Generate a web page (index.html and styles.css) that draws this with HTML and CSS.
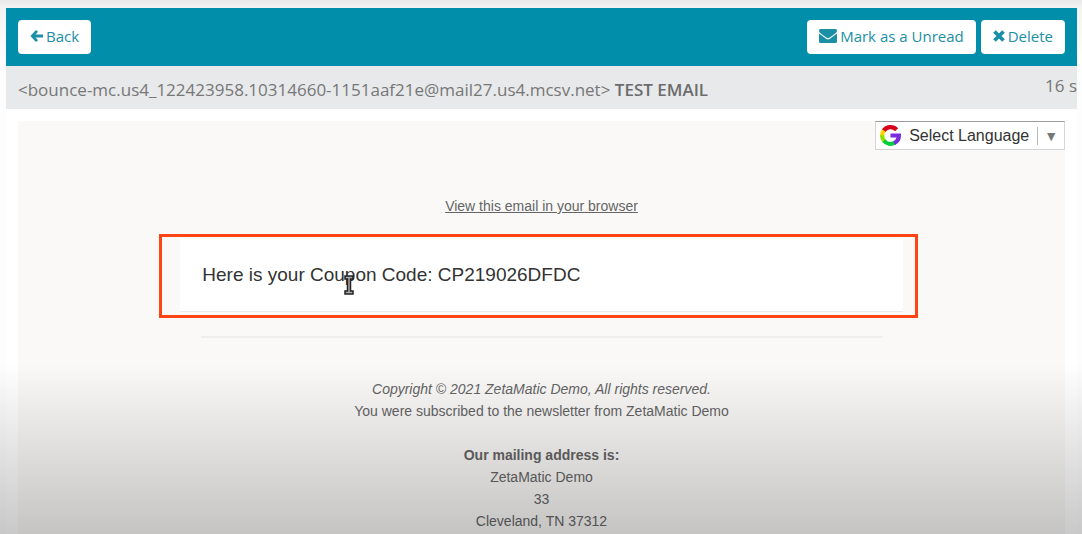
FILE: index.html
```html
<!DOCTYPE html>
<html lang="en">
<head>
  <meta charset="UTF-8">
  <meta name="viewport" content="width=device-width, initial-scale=1.0">
  <title>TEST EMAIL</title>
  <link rel="stylesheet" href="styles.css">
</head>
<body>
  <div class="mail">
    <div class="toolbar">
      <button type="button" class="btn">
        <svg class="icon-back" viewBox="0 0 14 14"><path d="M7.5 1.5 2.5 7l5 5.5M3 7h11" fill="none" stroke="currentColor" stroke-width="3"/></svg>
        Back
      </button>
      <div class="actions">
        <button type="button" class="btn">
          <svg class="icon-mail" viewBox="0 0 18 14"><path fill="currentColor" d="M1.5 0h15A1.5 1.5 0 0 1 18 1.5C18 3 17 4 16 4.700L11.500 8C10.500 8.700 9.800 9.200 9 9.200S7.500 8.700 6.500 8L2 4.700C1 4 0 3 0 1.500A1.500 1.500 0 0 1 1.500 0zM0 4.500 5.800 8.800C7 9.700 8 10.400 9 10.400s2-.7 3.200-1.600L18 4.500v8a1.500 1.500 0 0 1-1.500 1.500h-15A1.500 1.500 0 0 1 0 12.500z"/></svg>
          Mark as a Unread
        </button>
        <button type="button" class="btn">
          <svg class="icon-delete" viewBox="0 0 12 12"><path d="m1.5 1.5 9 9m0-9-9 9" stroke="currentColor" stroke-width="3.8"/></svg>
          Delete
        </button>
      </div>
    </div>

    <div class="subject">
      <div class="sender">&lt;bounce-mc.us4_122423958.10314660-1151aaf21e@mail27.us4.mcsv.net&gt; <b>TEST EMAIL</b></div>
      <div class="age">16 s</div>
    </div>

    <div class="body">
      <div class="message">
        <label class="language">
          <svg class="icon-g" viewBox="0 0 20 20" fill="none" stroke-width="4">
            <path stroke="#d9001b" d="M3.2 5.8A8 8 0 0 1 15.8 4.5"/>
            <path stroke="#ffd500" d="M3.6 5.2A8 8 0 0 0 2.1 11"/>
            <path stroke="#8fe000" d="M2 9.8A8 8 0 0 0 4.2 15.5"/>
            <path stroke="#00cf3a" d="M3.8 15A8 8 0 0 0 14 16.9"/>
            <path stroke="#7a2be0" d="M10 10h8A8 8 0 0 1 13.5 17.2"/>
          </svg>
          <select aria-label="Select Language">
            <option>Select Language</option>
          </select>
          <span class="arrow">▼</span>
        </label>

        <p class="view"><a href="#">View this email in your browser</a></p>

        <div class="card">
          Here is your Coupon Code: CP219026DFDC
          <div class="highlight"></div>
          <svg class="cursor" viewBox="0 0 10 20"><path d="M1 1h8v3H6.5v12H9v3H1v-3h2.5V4H1z" fill="#aaa" stroke="#222" stroke-width="1.5"/></svg>
        </div>

        <div class="footer">
          <em>Copyright © 2021 ZetaMatic Demo, All rights reserved.</em><br>
          You were subscribed to the newsletter from ZetaMatic Demo<br>
          <br>
          <strong>Our mailing address is:</strong><br>
          ZetaMatic Demo<br>
          33<br>
          Cleveland, TN 37312
        </div>
      </div>
    </div>
  </div>
  <div class="shade"></div>
</body>
</html>
```

FILE: styles.css
```css
* { box-sizing:border-box; }
html, body { margin:0; height:100%; overflow:hidden; }
body { position:relative; display:flex; flex-direction:column; padding:8px 5px 0 6px; background:linear-gradient(#e9e9e9, #f3f3f3 8px, #fdfdfd 60px); font-family:"Open Sans",sans-serif; color:#777; }

.mail { flex:1; display:flex; flex-direction:column; min-height:0; background:#fff; }

.toolbar { display:flex; justify-content:space-between; padding:12px; background:#008eaa; }
.actions { display:flex; gap:5px; }
.btn { display:flex; align-items:center; gap:3px; height:34px; padding:0 12px 2px; border:0; border-radius:4px; background:#fff; color:#1b8fa6; font-family:"Open Sans",sans-serif; font-size:15px; }
.icon-back { width:13px; height:14px; }
.icon-mail { width:18px; height:14px; }
.icon-delete { width:12px; height:12px; }

.subject { display:flex; justify-content:space-between; height:43px; padding-left:12px; background:#e7e9eb; font-size:17px; white-space:nowrap; }
.sender { line-height:47px; }
.sender b { font-weight:600; color:#6c6c6c; }
.age { line-height:40px; }

.body { flex:1; display:flex; padding:12px 12px 0; min-height:0; }
.message { flex:1; display:flex; flex-direction:column; align-items:center; background:#faf9f8; font-family:"Liberation Sans",Arial,sans-serif; }

.language { align-self:flex-end; display:flex; align-items:center; height:29px; padding:0 6px 0 4px; border:1px solid #d5d5d5; border-top-color:#9b9b9b; background:#fff; }
.icon-g { width:21px; height:21px; margin-right:8px; }
.language select { appearance:none; padding:0; border:0; background:none; color:#333; font-family:inherit; font-size:16px; }
.arrow { margin-left:7px; padding-left:6px; border-left:1px solid #bbb; color:#777; font-size:14px; line-height:18px; }

.view { margin:45px 0 22px; font-size:14px; line-height:22px; }
.view a { color:#656565; }

.card { position:relative; width:69%; padding:22px; border-bottom:1px solid #eaeaea; background:#fff; color:#333; font-size:19px; line-height:28px; }
.highlight { position:absolute; inset:-5px -15px -7px -21px; border:3px solid #ff4514; }
.cursor { position:absolute; left:164px; top:36px; width:10px; height:20px; }

.footer { width:65%; margin-top:24px; padding-top:40px; border-top:2px solid #eee; color:#656565; font-size:14px; line-height:22px; text-align:center; }

/* darkens the lower part of the window */
.shade { position:absolute; inset:68% 0 0; background:linear-gradient(rgba(0,0,0,0), rgba(0,0,0,.21)); pointer-events:none; }
```
